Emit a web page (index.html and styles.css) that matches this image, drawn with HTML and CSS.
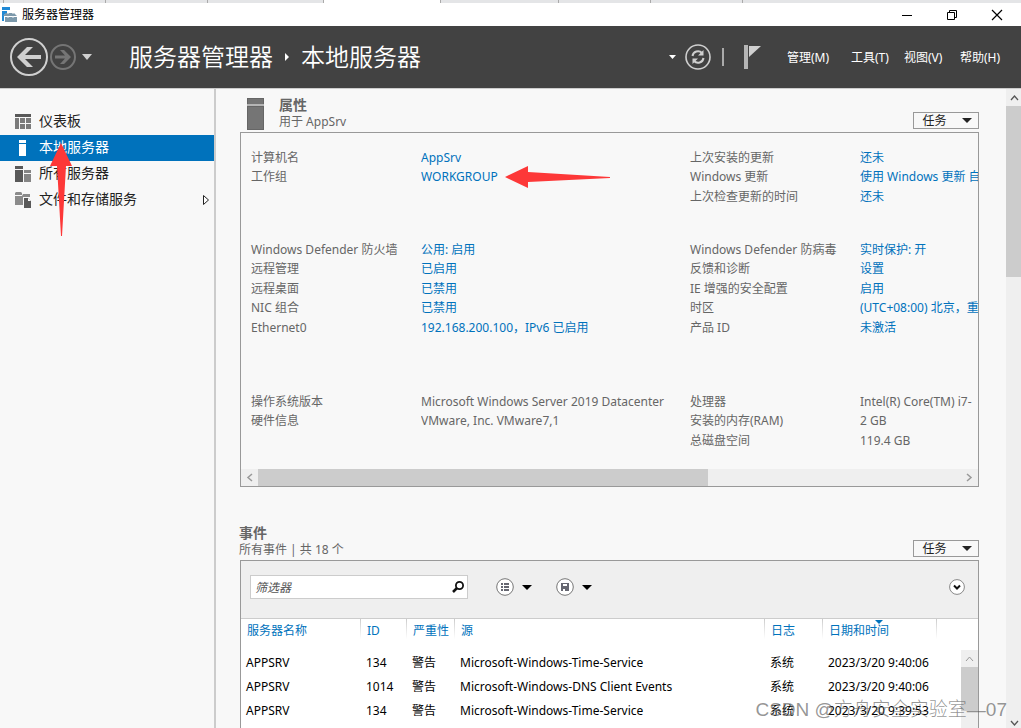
FILE: index.html
```html
<!DOCTYPE html>
<html lang="zh-CN">
<head>
<meta charset="utf-8">
<title>服务器管理器</title>
<link rel="stylesheet" href="styles.css">
</head>
<body>
<div class="window">
  <div class="tab-edge"><i class="t1"></i><i class="t2"></i><i class="t2"></i><i class="t3"></i><i class="t4"></i><i class="t5"></i><i class="t6"></i><i class="t7"></i></div>
  <div class="titlebar">
    <svg class="app-icon" width="16" height="16" viewBox="0 0 16 16"><path d="M1 0h8v3H1zM1 4h5v2L3 8v6H1z" fill="#2089d5"/><path d="M2 9l3-3h8l3 3v6H4V9z" fill="#7c99ab"/><path d="M7 7V5h5v2M4 9.500h12" stroke="#fff" fill="none"/><path d="M7 9v2M12 9v2" stroke="#e4edf3"/></svg>
    <span>服务器管理器</span>
    <div class="controls">
      <button aria-label="最小化"><svg width="12" height="12"><path d="M1 6.500h10" stroke="#000"/></svg></button>
      <button aria-label="还原"><svg width="12" height="12" fill="none" stroke="#000"><path d="M1.500 3.500h7v7h-7zM3.500 3V1.500h7v7H9"/></svg></button>
      <button aria-label="关闭"><svg width="12" height="12"><path d="M1 1l10 10M11 1L1 11" stroke="#000" stroke-width="1.200"/></svg></button>
    </div>
  </div>
  <header class="header">
    <button aria-label="后退"><svg width="38" height="38" viewBox="0 0 38 38"><circle cx="19" cy="19" r="18" fill="none" stroke="#d0d0d0" stroke-width="2"/><path d="M7 19l10-10h6l-8 8h16v4H15l8 8h-6z" fill="#d0d0d0"/></svg></button>
    <button class="forward" aria-label="前进"><svg width="26" height="26" viewBox="0 0 26 26"><circle cx="13" cy="13" r="12" fill="none" stroke="#757575" stroke-width="2"/><path d="M21 13l-7-7h-4l5 5.500H5v3h10L10 20h4z" fill="#757575"/></svg></button>
    <button class="history" aria-label="历史记录"><svg width="12" height="6"><path d="M1 0h10L6 6z" fill="#d0d0d0"/></svg></button>
    <h1 class="crumbs"><span>服务器管理器</span><svg width="6" height="8"><path d="M1 0l4 4-4 4z" fill="#fff"/></svg><span>本地服务器</span></h1>
    <button class="more" aria-label="更多"><svg width="8" height="5"><path d="M1 0h7L4.500 4z" fill="#fff"/></svg></button>
    <button aria-label="刷新"><svg width="26" height="26" viewBox="0 0 26 26"><g fill="none" stroke="#cfcfcf"><circle cx="13" cy="13" r="12" stroke-width="1.600"/><path d="M7.500 12a5.500 5.500 0 0 1 9.500-3M18.500 14a5.500 5.500 0 0 1-9.500 3" stroke-width="2"/></g><path d="M18.500 6v5.500H13zM7.500 20v-5.500H13z" fill="#cfcfcf"/></svg></button>
    <span class="divider"></span>
    <button aria-label="通知"><svg width="18" height="26" viewBox="0 0 18 26"><path d="M0 1h4v24H0z" fill="#b5b5b5"/><path d="M5 2h12L5 13z" fill="#d0d0d0"/></svg></button>
    <nav class="menu"><button>管理(M)</button><button>工具(T)</button><button>视图(V)</button><button>帮助(H)</button></nav>
  </header>
  <div class="body">
    <nav class="sidebar">
      <a href="#dashboard"><svg width="16" height="16"><path d="M0 0h16v3H0z" fill="#595959"/><path d="M0 4h4v11H0zM5 4h5v5H5zM11 4h5v5h-5zM5 10h5v5H5zM11 10h5v5h-5z" fill="#7b7b7b"/></svg><span>仪表板</span></a>
      <a href="#local" class="selected" aria-current="page"><svg width="16" height="16"><path d="M4 0h7v3H4zM4 4h7v12H4z" fill="#fff"/></svg><span>本地服务器</span></a>
      <a href="#all"><svg width="16" height="16"><path d="M0 0h8v3H0zM0 4h8v12H0z" fill="#595959"/><path d="M9 4h7v3H9zM9 8h7v8H9z" fill="#858585"/></svg><span>所有服务器</span></a>
      <a href="#files"><svg width="16" height="16"><path d="M0 1l1-1h5l1 1v2H0zM0 4h7l1-2h7v3H8v8H0z" fill="#8b8b8b"/><path d="M9 6h4l3 3v7H9z" fill="#595959"/><path d="M13 6v3h3z" fill="#fff"/></svg><span>文件和存储服务</span><svg class="expand" width="8" height="12"><path d="M1.500 1.500l5 4.500-5 4.500z" fill="#fff" stroke="#222"/></svg></a>
    </nav>
    <main class="main">
      <section>
        <div class="section-head">
          <svg class="tower" width="17" height="32"><path d="M0 0h17v32H0z" fill="#666"/><path d="M1 1h15v5H1zM1 9h15v22H1z" fill="#757575"/><path d="M0 6h17v2H0z" fill="#b5b5b5"/></svg>
          <div class="heading"><h2>属性</h2><p>用于 AppSrv</p></div>
          <button class="tasks">任务<svg width="10" height="5"><path d="M0 0h10L5 5z" fill="#222"/></svg></button>
        </div>
        <div class="panel">
          <div class="properties">
            <dl class="g1"><dt>计算机名</dt><dd><a href="#name">AppSrv</a></dd><dt>工作组</dt><dd><a href="#workgroup">WORKGROUP</a></dd></dl>
            <dl class="g1"><dt>上次安装的更新</dt><dd><a href="#installed">还未</a></dd><dt>Windows 更新</dt><dd><a href="#update">使用 Windows 更新 自动</a></dd><dt>上次检查更新的时间</dt><dd><a href="#checked">还未</a></dd></dl>
            <dl class="g2"><dt>Windows Defender 防火墙</dt><dd><a href="#firewall">公用: 启用</a></dd><dt>远程管理</dt><dd><a href="#remote">已启用</a></dd><dt>远程桌面</dt><dd><a href="#desktop">已禁用</a></dd><dt>NIC 组合</dt><dd><a href="#nic">已禁用</a></dd><dt>Ethernet0</dt><dd><a href="#ethernet">192.168.200.100，IPv6 已启用</a></dd></dl>
            <dl class="g2"><dt>Windows Defender 防病毒</dt><dd><a href="#antivirus">实时保护: 开</a></dd><dt>反馈和诊断</dt><dd><a href="#feedback">设置</a></dd><dt>IE 增强的安全配置</dt><dd><a href="#ie">启用</a></dd><dt>时区</dt><dd><a href="#timezone">(UTC+08:00) 北京，重庆</a></dd><dt>产品 ID</dt><dd><a href="#product">未激活</a></dd></dl>
            <dl class="g3"><dt>操作系统版本</dt><dd>Microsoft Windows Server 2019 Datacenter</dd><dt>硬件信息</dt><dd>VMware, Inc. VMware7,1</dd></dl>
            <dl class="g3"><dt>处理器</dt><dd>Intel(R) Core(TM) i7-</dd><dt>安装的内存(RAM)</dt><dd>2 GB</dd><dt>总磁盘空间</dt><dd>119.4 GB</dd></dl>
          </div>
          <div class="hscroll">
            <button aria-label="向左滚动"><svg width="7" height="9"><path d="M6 1L2 4.500 6 8" fill="none" stroke="#999" stroke-width="1.500"/></svg></button>
            <div class="htrack"><div class="hthumb"></div></div>
            <button aria-label="向右滚动"><svg width="7" height="9"><path d="M1 1l4 3.500L1 8" fill="none" stroke="#999" stroke-width="1.500"/></svg></button>
          </div>
        </div>
      </section>
      <section class="events">
        <div class="section-head">
          <div class="heading"><h2>事件</h2><p>所有事件 | 共 18 个</p></div>
          <button class="tasks">任务<svg width="10" height="5"><path d="M0 0h10L5 5z" fill="#222"/></svg></button>
        </div>
        <div class="panel grow">
          <div class="toolbar">
            <div class="filter"><input type="text" placeholder="筛选器" aria-label="筛选器"><button aria-label="搜索"><svg width="12" height="12"><circle cx="7.500" cy="4.500" r="3.600" fill="none" stroke="#111" stroke-width="1.800"/><path d="M5 7l-4 4" stroke="#111" stroke-width="2.500"/></svg></button></div>
            <button class="tool" aria-label="分组"><svg width="18" height="18"><circle cx="9" cy="9" r="8.300" fill="#fff" stroke="#777"/><path d="M5 5h2v2H5zM5 8h2v2H5zM5 11h2v2H5zM8 5h5v2H8zM8 8h5v2H8zM8 11h5v2H8z" fill="#666771"/></svg><svg width="10" height="5"><path d="M0 0h10L5 5z"/></svg></button>
            <button class="tool" aria-label="保存查询"><svg width="18" height="18"><circle cx="9" cy="9" r="8.300" fill="#fff" stroke="#777"/><path d="M5 5h8v8H5z" fill="#666771"/><path d="M7 6h4v2H7zM7 11h2v2H7z" fill="#fff"/></svg><svg width="10" height="5"><path d="M0 0h10L5 5z"/></svg></button>
            <button class="collapse" aria-label="展开"><svg width="16" height="16"><circle cx="8" cy="8" r="7.400" fill="#fff" stroke="#888"/><path d="M5 6.500L8 9.500l3-3" fill="none" stroke="#111" stroke-width="2"/></svg></button>
          </div>
          <div class="list">
            <table>
              <colgroup><col class="c-name"><col class="c-id"><col class="c-level"><col><col class="c-log"><col class="c-date"><col class="c-end"></colgroup>
              <thead><tr><th>服务器名称</th><th>ID</th><th>严重性</th><th>源</th><th>日志</th><th class="sorted">日期和时间<svg width="8" height="4"><path d="M0 0h8L4 4z" fill="#0072bc"/></svg></th><th></th></tr></thead>
              <tbody>
                <tr><td>APPSRV</td><td>134</td><td>警告</td><td>Microsoft-Windows-Time-Service</td><td>系统</td><td>2023/3/20 9:40:06</td><td></td></tr>
                <tr><td>APPSRV</td><td>1014</td><td>警告</td><td>Microsoft-Windows-DNS Client Events</td><td>系统</td><td>2023/3/20 9:40:06</td><td></td></tr>
                <tr><td>APPSRV</td><td>134</td><td>警告</td><td>Microsoft-Windows-Time-Service</td><td>系统</td><td>2023/3/20 9:39:53</td><td></td></tr>
              </tbody>
            </table>
            <div class="list-scroll"><button aria-label="向上滚动"><svg width="9" height="6"><path d="M1 5l3.500-4L8 5" fill="none" stroke="#999"/></svg></button><div class="list-thumb"></div></div>
          </div>
        </div>
      </section>
    </main>
    <div class="vscroll">
      <button aria-label="向上滚动"><svg width="9" height="6"><path d="M1 5l3.500-4L8 5" fill="none" stroke="#555" stroke-width="1.300"/></svg></button>
      <div class="vtrack"><div class="vthumb"></div></div>
      <button class="down" aria-label="向下滚动"><svg width="9" height="6"><path d="M1 1l3.500 4L8 1" fill="none" stroke="#555" stroke-width="1.300"/></svg></button>
    </div>
  </div>
  <svg class="arrow-up" width="22" height="94"><path d="M11 0l11 23h-6L12 93h-1L7 23H0z" fill="#fd3838"/></svg>
  <svg class="arrow-left" width="106" height="22"><path d="M0 11L23 0v6l82 5v1L23 16v6z" fill="#fd3838"/></svg>
  <div class="watermark">CSDN @方舟安全实验室—07</div>
</div>
</body>
</html>
```

FILE: styles.css
```css
* { box-sizing: border-box; }
body, h1, h2, p, dl, dd { margin: 0; }
body {
  font: 12px/19px "Noto Sans", "Noto Sans CJK SC", sans-serif;
  color: #666;
  background: #f8f8f8;
}
button {
  display: flex;
  align-items: center;
  justify-content: center;
  padding: 0;
  border: 0;
  background: none;
  font: inherit;
  color: inherit;
  white-space: nowrap;
}
svg { display: block; flex: none; }
a { color: #0072bc; text-decoration: none; }

.window {
  position: relative;
  display: flex;
  flex-direction: column;
  height: 100vh;
  overflow: hidden;
}

.tab-edge { display: flex; flex: none; height: 3px; background: #e4e5e7; }
.tab-edge i { flex: none; border-right: 1px solid #aaa; }
.t1 { width: 4px; }
.t2 { width: 102px; }
.t3 { width: 116px; }
.t4 { width: 117px; background: #fff; }
.t5 { width: 118px; }
.t6 { width: 92px; }
.t7 { width: 92px; }

.titlebar {
  display: flex;
  flex: none;
  align-items: center;
  gap: 5px;
  height: 23px;
  padding: 0 17px 0 1px;
  background: #fff;
  color: #000;
}
.controls { display: flex; gap: 33px; margin-left: auto; padding-right: 1px; }

.header {
  display: flex;
  flex: none;
  align-items: center;
  height: 62px;
  padding: 0 19px 0 10px;
  background: #424242;
  color: #fff;
}
.forward { margin-left: 2px; }
.history { margin-left: 5px; }
.crumbs {
  display: flex;
  align-items: center;
  gap: 11px;
  margin: 0 auto 0 36px;
  font-size: 24px;
  line-height: 32px;
  font-weight: 350;
  white-space: nowrap;
}
.more { margin-right: 9px; }
.divider { width: 2px; height: 18px; margin: 0 20px 0 11px; background: #aaa; }
.menu { display: grid; grid-template-columns: 64px 53px 56px 42px; margin-left: 25px; }
.menu button { justify-content: flex-start; }

.body {
  display: flex;
  flex: 1;
  min-height: 0;
  border-top: 1px solid #ccc;
}
.sidebar {
  flex: none;
  width: 216px;
  padding-top: 20px;
  border-right: 2px solid #ccc;
}
.sidebar a {
  display: flex;
  align-items: center;
  gap: 8px;
  height: 26px;
  padding: 0 4px 0 15px;
  font-size: 14px;
  line-height: 18px;
  color: #222;
}
.sidebar span { padding-bottom: 2px; }
.sidebar .selected { background: #0072bc; color: #fff; }
.expand { margin-left: auto; }

.main {
  display: flex;
  flex: 1;
  flex-direction: column;
  min-width: 0;
  padding: 8px 27px 0 24px;
}
.section-head { display: flex; align-items: flex-start; height: 35px; }
.tower { margin: 1px 15px 0 7px; }
h2 { font-size: 14px; line-height: 16px; font-weight: 700; }
.heading p { line-height: 17px; }
.tasks {
  gap: 15px;
  width: 66px;
  height: 17px;
  margin: 15px 0 0 auto;
  padding-left: 2px;
  border: 1px solid #999;
  color: #222;
}
.panel { border: 1px solid #999; overflow: hidden; }
.properties {
  display: grid;
  grid-template-columns: minmax(0, 1fr) 288px;
  padding: 15px 0 0 10px;
}
.properties dl {
  display: grid;
  grid-template-columns: 170px minmax(0, 1fr);
  grid-auto-rows: 19px 19px 20px 19px 20px;
  white-space: nowrap;
}
.properties dd { overflow: hidden; }
.properties dt, .properties dd { align-self: end; }
.g1 { height: 92px; }
.g2 { height: 152px; }
.g3 { height: 77px; }
.hscroll { display: grid; grid-template-columns: 17px 1fr 17px; height: 17px; background: #efefef; }
.hthumb { width: 64%; height: 100%; background: #ccc; }

.events {
  display: flex;
  flex: 1;
  flex-direction: column;
  min-height: 0;
  padding-top: 38px;
}
.events .heading { margin-left: -1px; }
.events .section-head { flex: none; }
.grow { display: flex; flex: 1; flex-direction: column; min-height: 0; border-bottom: 0; }
.toolbar {
  display: flex;
  flex: none;
  align-items: center;
  gap: 28px;
  padding: 14px 13px 19px 9px;
  background: #efefef;
  border-bottom: 1px solid #ccc;
}
.filter {
  display: flex;
  width: 218px;
  height: 24px;
  padding: 0 3px 0 4px;
  background: #fff;
  border: 1px solid #ccc;
}
.filter input {
  flex: 1;
  min-width: 0;
  padding: 0;
  border: 0;
  font: italic 12px/20px "Noto Sans CJK SC", sans-serif;
}
.filter input::placeholder { color: #555; opacity: 1; }
.tool { gap: 8px; margin-right: -4px; color: #111; }
.collapse { margin-left: auto; }

.list { display: grid; flex: 1; min-height: 0; background: #fff; }
.list > * { grid-area: 1 / 1; }
table {
  align-self: start;
  width: 100%;
  table-layout: fixed;
  border-collapse: collapse;
  color: #000;
}
th, td { padding: 0 0 0 6px; text-align: left; white-space: nowrap; line-height: 24px; }
td:first-child { padding-left: 5px; }
th {
  height: 32px;
  padding-left: 7px;
  vertical-align: top;
  font-weight: 400;
  color: #0072bc;
}
th:first-child { padding-left: 6px; }
th + th { background: linear-gradient(#ccc, #fff) left top / 1px 20px no-repeat; }
.c-name { width: 119px; }
.c-id { width: 46px; }
.c-level { width: 48px; }
.c-log { width: 58px; }
.c-date { width: 114px; }
.c-end { width: 42px; }
.sorted { position: relative; }
.sorted svg { position: absolute; top: 1px; left: 53px; }
.list-scroll { justify-self: end; width: 17px; margin-top: 31px; background: #efefef; }
.list-scroll button { width: 17px; height: 17px; }
.list-thumb { height: 44px; background: #ccc; }

.vscroll { display: flex; flex: none; flex-direction: column; width: 15px; background: #efefef; }
.vscroll button { height: 17px; padding-left: 2px; }
.vscroll .down { height: 10px; }
.vtrack { flex: 1; }
.vthumb { height: 28%; background: #ccc; }

.arrow-up { position: absolute; left: 50px; top: 143px; }
.arrow-left { position: absolute; left: 505px; top: 166px; }
.watermark {
  position: absolute;
  right: 14px;
  bottom: 6px;
  font: 300 19px/24px "Liberation Sans", "Noto Sans CJK SC", sans-serif;
  color: rgba(90, 90, 90, 0.65);
  white-space: nowrap;
}
```
